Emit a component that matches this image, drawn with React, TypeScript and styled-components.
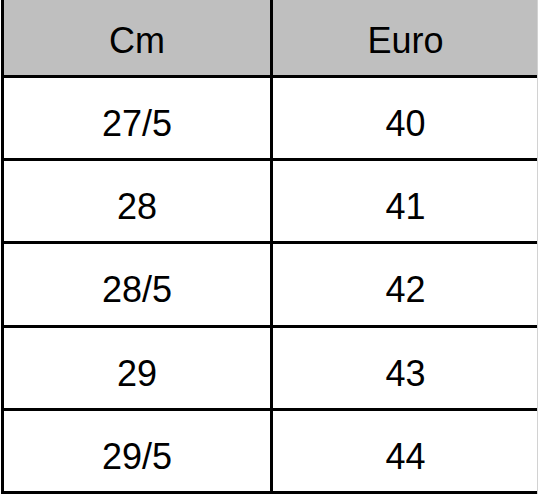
import React, { FC } from "react";
import styled, { createGlobalStyle } from "styled-components";

const GlobalStyle = createGlobalStyle`
  html, body {
    margin: 0;
    padding: 0;
    background: #ffffff;
  }
  body {
    font-family: "Liberation Sans", Arial, sans-serif;
    color: #000000;
  }
`;

const Frame = styled.div`
  width: 538px;
  height: 494px;
  padding-left: 1px;
  border-right: 1px solid #d2d2d2;
  box-sizing: border-box;
  overflow: hidden;
`;

const Table = styled.div`
  display: grid;
  grid-template-columns: 266px 265px;
  grid-template-rows: 75px 80px 80px 81px 80px 80px;
  gap: 3px;
  background: #000000;
  border-left: 3px solid #000000;
  border-bottom: 3px solid #000000;
`;

const Cell = styled.div<{ $head?: boolean }>`
  display: flex;
  align-items: center;
  justify-content: center;
  padding-top: ${(p) => (p.$head ? "6px" : "11px")};
  box-sizing: border-box;
  background: ${(p) => (p.$head ? "#bfbfbf" : "#ffffff")};
  font-size: 36px;
  line-height: 1;
`;

const rows: [string, string][] = [
  ["27/5", "40"],
  ["28", "41"],
  ["28/5", "42"],
  ["29", "43"],
  ["29/5", "44"],
];

const App: FC = () => {
  return (
    <>
      <GlobalStyle />
      <Frame>
        <Table>
          <Cell $head>Cm</Cell>
          <Cell $head>Euro</Cell>
          {rows.map(([cm, eu]) => (
            <React.Fragment key={cm}>
              <Cell>{cm}</Cell>
              <Cell>{eu}</Cell>
            </React.Fragment>
          ))}
        </Table>
      </Frame>
    </>
  );
};

export default App;
